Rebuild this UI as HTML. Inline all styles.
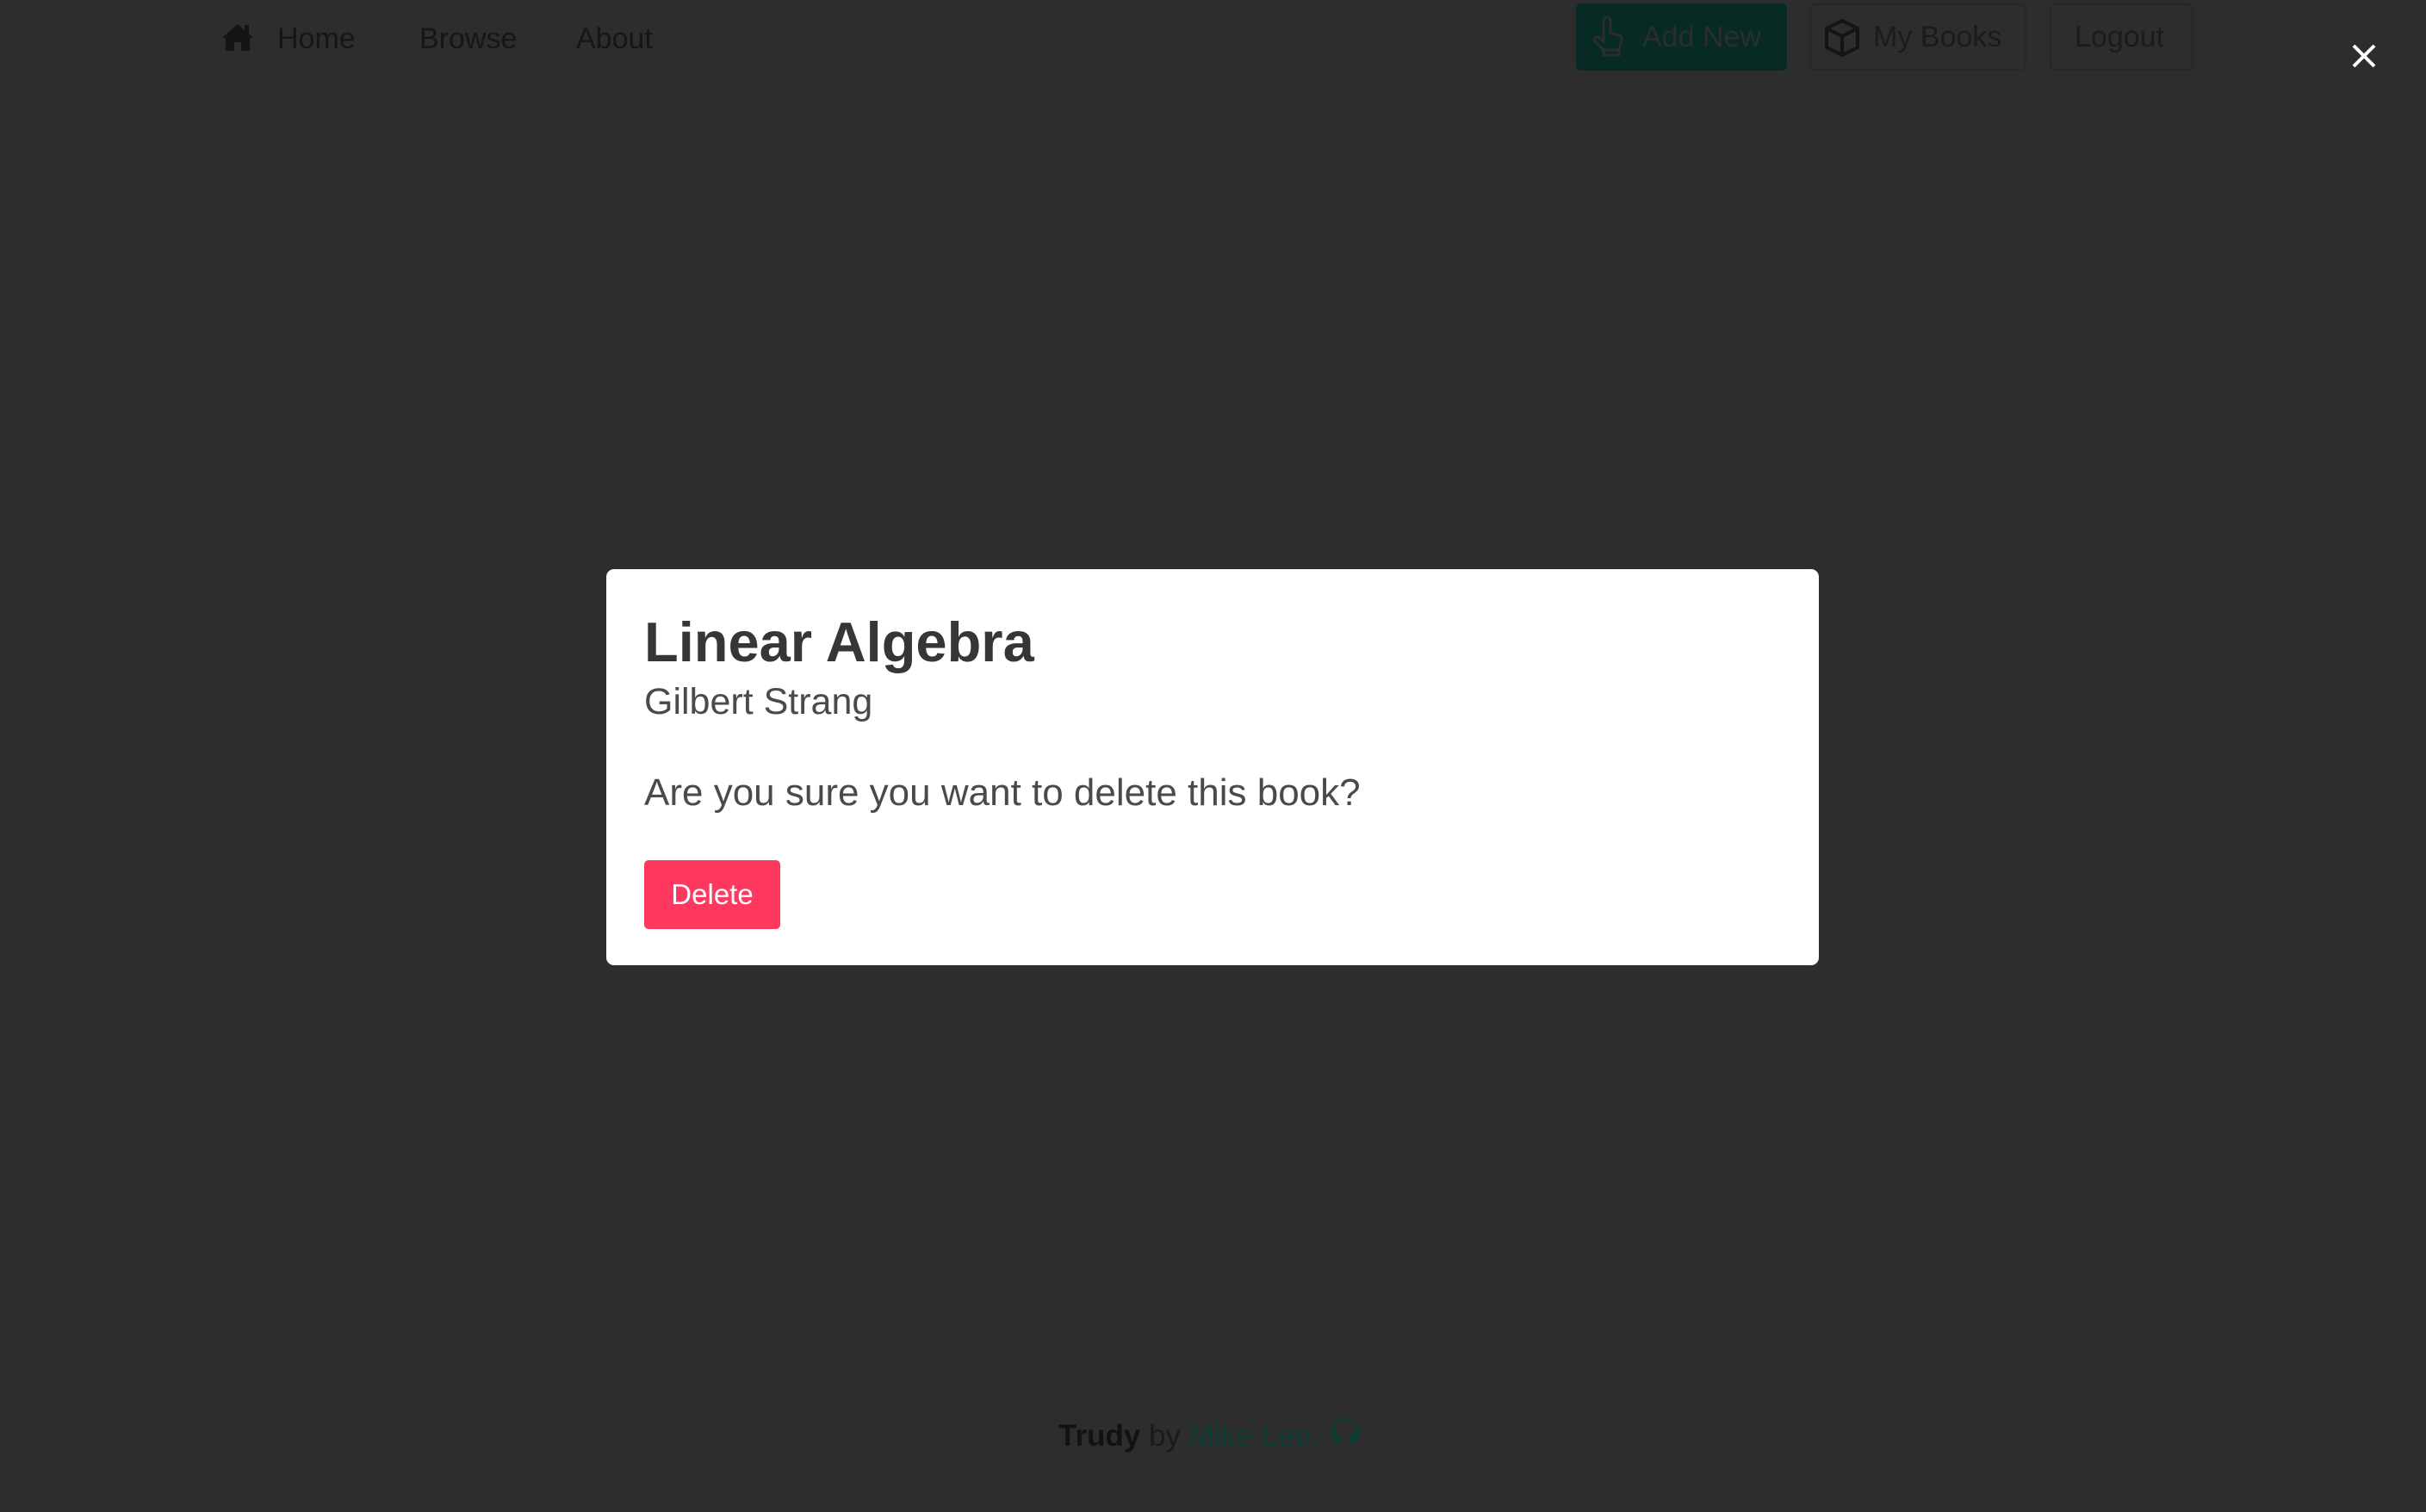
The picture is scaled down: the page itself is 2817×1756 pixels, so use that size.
<!DOCTYPE html>
<html><head><meta charset="utf-8"><style>
html,body{margin:0;padding:0;width:2817px;height:1756px;background:#2d2d2d;overflow:hidden;font-family:"Liberation Sans",sans-serif;}
.abs{position:absolute;}
.nav{color:#161616;font-size:34px;line-height:1;}
.btn{position:absolute;top:4px;height:78px;border:2px solid #282828;border-radius:6px;box-sizing:border-box;color:#1b1b1b;font-size:34px;display:flex;align-items:center;}
.modal{position:absolute;left:704px;top:661px;width:1408px;height:460px;background:#fff;border-radius:9px;}
</style></head><body>
<svg class="abs" style="left:256px;top:26px" width="40" height="34" viewBox="0 0 40 34"><path d="M20 2 L2 18 L6 18 L6 33 L16 33 L16 23 L24 23 L24 33 L34 33 L34 18 L38 18 Z" fill="#141414"/><rect x="28" y="3" width="5" height="10" fill="#141414"/></svg>
<div class="abs nav" style="left:322px;top:28px">Home</div>
<div class="abs nav" style="left:487px;top:28px">Browse</div>
<div class="abs nav" style="left:669px;top:28px">About</div>
<div class="btn" style="left:1830px;width:245px;background:#072a24;border-color:#072a24;color:#2a2e2d;padding-left:75px">Add New</div>
<svg class="abs" style="left:1848px;top:18px" width="40" height="50" viewBox="0 0 40 50"><path d="M14 30 V6 a4 4 0 0 1 8 0 V20 l10 3 a4 4 0 0 1 3 5 l-3 12 H14 L4 30 a3 3 0 0 1 5 -4 Z M14 40 V46 H32 V40" fill="none" stroke="#2a2e2d" stroke-width="3"/></svg>
<div class="btn" style="left:2101px;width:252px;padding-left:72px">My Books</div>
<svg class="abs" style="left:2117px;top:22px" width="44" height="44" viewBox="0 0 44 44"><path d="M22 2 L40 11 V33 L22 42 L4 33 V11 Z M4 11 L22 20 L40 11 M22 20 V42" fill="none" stroke="#141414" stroke-width="4"/></svg>
<div class="btn" style="left:2380px;width:167px;padding-left:27px">Logout</div>
<svg class="abs" style="left:2730px;top:50px" width="30" height="30" viewBox="0 0 30 30"><path d="M3 3 L27 27 M27 3 L3 27" stroke="#fff" stroke-width="4"/></svg>
<div class="modal">
<div class="abs" style="left:44px;top:47px;font-size:65px;color:#363636;font-weight:bold;white-space:nowrap">Linear Algebra</div>
<div class="abs" style="left:44px;top:130px;font-size:43px;color:#4a4a4a">Gilbert Strang</div>
<div class="abs" style="left:44px;top:235px;font-size:44px;color:#4a4a4a;white-space:nowrap">Are you sure you want to delete this book?</div>
<div class="abs" style="left:44px;top:338px;width:158px;height:80px;background:#ff3860;border-radius:5px;color:#fff;font-size:33px;display:flex;align-items:center;justify-content:center">Delete</div>
</div>
<div class="abs" style="left:1229px;top:1648px;font-size:35px;color:#1a1a1a;white-space:nowrap"><b style="color:#121212">Trudy</b> by <span style="color:#0d3a31">Mike Lee.</span></div>
<svg class="abs" style="left:1543px;top:1644px" width="38" height="38" viewBox="0 0 38 38"><path d="M13 34 C5 31 2 25 2 19 A17 17 0 0 1 36 19 C36 25 33 31 25 34 V27 C25 25 24 24 23 23 C28 22 31 20 31 14 C31 12 30 10 29 9 C29 7 29 6 28 5 C26 5 24 6 23 7 C20 6 18 6 15 7 C14 6 12 5 10 5 C9 6 9 7 9 9 C8 10 7 12 7 14 C7 20 10 22 15 23 C14 24 13 25 13 27 Z" fill="#0d3a31"/></svg>
</body></html>
